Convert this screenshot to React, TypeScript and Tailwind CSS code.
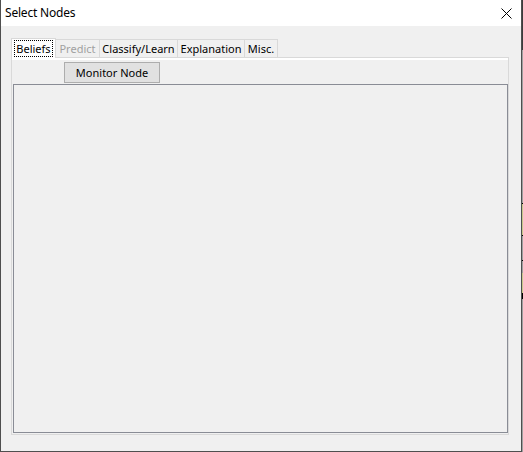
const tabs = [
  { label: "Predict", width: "w-[44px]", disabled: true },
  { label: "Classify/Learn", width: "w-[78px]", disabled: false },
  { label: "Explanation", width: "w-[67px]", disabled: false },
  { label: "Misc.", width: "w-[33px]", disabled: false },
];

function CloseIcon() {
  return (
    <svg width="11" height="11" viewBox="0 0 11 11" className="block">
      <path d="M0.5 0.5 L10.5 10.5 M10.5 0.5 L0.5 10.5" stroke="#000" strokeWidth="1" />
    </svg>
  );
}

function TabStrip() {
  return (
    <div className="flex items-end h-[19px]">
      {/* active tab sits one pixel over the panel edge */}
      <div className="relative z-10 -mb-px w-[45px] h-[20px] bg-white border-l border-t border-r border-[#d9d9d9] flex items-start justify-center pt-[1px]">
        <span className="border border-dotted border-black h-[17px] leading-[15px] w-[39px] text-center">Beliefs</span>
      </div>
      {tabs.map((t) => (
        <div
          key={t.label}
          className={`${t.width} h-[18px] border-t border-r border-[#d9d9d9] flex items-center justify-center leading-none whitespace-nowrap ${t.disabled ? "text-[#a0a0a0]" : "text-black"}`}
        >
          {t.label}
        </div>
      ))}
    </div>
  );
}

function NodePanel() {
  return (
    <div className="w-[498px] h-[378px] border border-[#d9d9d9] flex flex-col">
      <div className="h-[2px] bg-white" />
      <div className="h-[24px] flex items-start pt-[2px] pl-[52px]">
        <button className="w-[96px] h-[21px] bg-[#e1e1e1] border border-[#adadad] text-black leading-none">
          Monitor Node
        </button>
      </div>
      <div className="ml-px h-[349px] border border-[#898c95] bg-[#f0f0f0]" />
    </div>
  );
}

export default function App() {
  return (
    <div className="flex w-[523px] h-[452px] text-[11px] text-black" style={{ fontFamily: '"Noto Sans", "Liberation Sans", sans-serif' }}>
      <div className="w-[522px] h-[452px] flex flex-col border-l border-r border-b border-[#4f4f4f] bg-[#f0f0f0]">
        <div className="h-[26px] bg-white flex items-center justify-between pl-[4px] pr-[9px]">
          <span className="text-[12px] leading-none pb-[1px] tracking-[-0.2px]">Select Nodes</span>
          <CloseIcon />
        </div>
        <div className="flex-1 pt-[12px] pl-[10px]">
          <TabStrip />
          <NodePanel />
        </div>
      </div>
      {/* sliver of whatever sits behind the dialog */}
      <div className="w-px h-[452px] flex flex-col">
        <div className="h-[50px] bg-[#3c3c3c]" />
        <div className="h-[153px] bg-[#a0a0a0]" />
        <div className="h-px bg-black" />
        <div className="h-[31px] bg-[#c8c88c]" />
        <div className="h-px bg-black" />
        <div className="h-[24px] bg-[#a0a0a0]" />
        <div className="h-px bg-black" />
        <div className="h-[12px] bg-[#a0a0a0]" />
        <div className="h-[20px] bg-[#c8c88c]" />
        <div className="h-[6px] bg-black" />
        <div className="flex-1 bg-[#a0a0a0]" />
      </div>
    </div>
  );
}
